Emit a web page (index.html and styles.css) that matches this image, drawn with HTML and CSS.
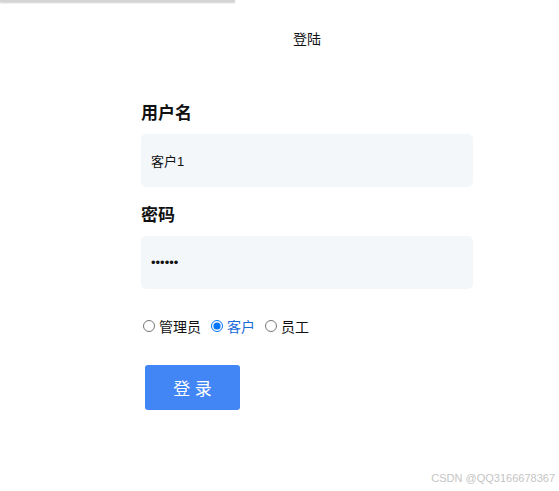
FILE: index.html
```html
<!DOCTYPE html>
<html lang="zh-CN">
<head>
    <meta charset="UTF-8">
    <meta name="viewport" content="width=device-width, initial-scale=1.0">
    <title>登陆</title>
    <link rel="stylesheet" href="styles.css">
</head>
<body>
    <div class="top-bar"></div>
    <div class="login">
        <h2 class="title">登陆</h2>
        <form class="login-form" onsubmit="return false">
            <label class="field-label" for="username">用户名</label>
            <input class="field-input" type="text" id="username" value="客户1">

            <label class="field-label" for="password">密码</label>
            <input class="field-input" type="password" id="password" value="123456">

            <div class="roles">
                <label class="role"><input type="radio" name="role" value="admin">管理员</label>
                <label class="role role-active"><input type="radio" name="role" value="customer" checked>客户</label>
                <label class="role"><input type="radio" name="role" value="staff">员工</label>
            </div>

            <button class="login-btn" type="submit">登 录</button>
        </form>
    </div>
    <div class="watermark">CSDN @QQ3166678367</div>
</body>
</html>
```

FILE: styles.css
```css
body {
    margin: 0;
    font-family: "Liberation Sans", "Noto Sans CJK SC", sans-serif;
    background-color: #fff;
    color: #111;
}
.top-bar {
    width: 235px;
    height: 2px;
    background-color: #d4d4d4;
    box-shadow: 0 1px 2px rgba(0, 0, 0, 0.2);
}
.login {
    width: 332px;
    margin-left: 141px;
}
.title {
    margin: 0;
    padding-top: 27px;
    text-align: center;
    font-size: 14px;
    font-weight: normal;
    line-height: 20px;
}
.login-form {
    display: flex;
    flex-direction: column;
    padding-top: 54px;
}
.field-label {
    font-size: 17px;
    font-weight: bold;
    line-height: 22px;
    margin-bottom: 9px;
}
.field-input {
    height: 53px;
    box-sizing: border-box;
    padding: 0 10px;
    border: none;
    border-radius: 5px;
    background-color: #f3f7fa;
    font-family: inherit;
    font-size: 13px;
    color: #111;
    margin-bottom: 18px;
    outline: none;
}
.roles {
    display: flex;
    align-items: center;
    gap: 8px;
    font-size: 14px;
    margin-top: 9px;
}
.role {
    display: flex;
    align-items: center;
}
.role input {
    margin: 0 4px 0 2px;
    width: 12px;
    height: 12px;
}
.role-active {
    color: #1a6ad8;
}
.login-btn {
    align-self: flex-start;
    margin-top: 29px;
    margin-left: 4px;
    width: 95px;
    height: 45px;
    border: none;
    border-radius: 3px;
    background-color: #4285f4;
    color: #fff;
    font-family: inherit;
    font-size: 17px;
    cursor: pointer;
}
.watermark {
    position: absolute;
    right: 4px;
    top: 472px;
    font-size: 11px;
    color: #c4c4c4;
}
```
